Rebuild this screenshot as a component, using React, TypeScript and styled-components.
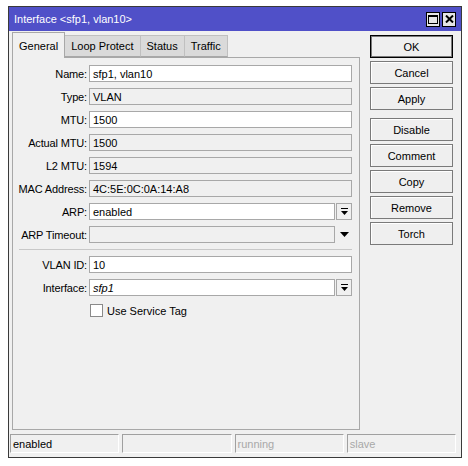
import React, { useState } from 'react';
import styled, { createGlobalStyle } from 'styled-components';

const GlobalStyle = createGlobalStyle`
  html, body {
    margin: 0;
    padding: 0;
    background: #ffffff;
  }
  body {
    font-family: "Liberation Sans", Arial, sans-serif;
    font-size: 11px;
    color: #000;
  }
`;

const Window = styled.div`
  margin: 6px 0 0 8px;
  width: 454px;
  height: 452px;
  box-sizing: border-box;
  border: 1px solid #3a3a3a;
  background: #f0f0f0;
  display: flex;
  flex-direction: column;
`;

const TitleBar = styled.div`
  height: 24px;
  flex: none;
  background: #5050c8;
  color: #fff;
  display: flex;
  align-items: center;
  padding: 0 5px 0 5px;
`;

const Title = styled.div`
  flex: 1;
  font-size: 11px;
  white-space: nowrap;
`;

const TitleButtons = styled.div`
  display: flex;
  gap: 2px;
`;

const TitleButton = styled.div`
  width: 14px;
  height: 15px;
  box-sizing: border-box;
  border: 1px solid #000;
  background: #e6e6e6;
  display: flex;
  align-items: center;
  justify-content: center;
`;

const Body = styled.div`
  flex: 1;
  display: flex;
  padding: 1px 8px 0 3px;
  min-height: 0;
`;

const LeftColumn = styled.div`
  width: 348px;
  display: flex;
  flex-direction: column;
`;

const TabRow = styled.div`
  height: 25px;
  display: flex;
  align-items: flex-end;
`;

const Tab = styled.div<{ $active?: boolean }>`
  box-sizing: border-box;
  height: ${p => (p.$active ? '26px' : '22px')};
  margin-bottom: ${p => (p.$active ? '-1px' : '0')};
  position: relative;
  z-index: ${p => (p.$active ? 1 : 0)};
  background: ${p => (p.$active ? '#f0f0f0' : '#dadada')};
  border: 1px solid ${p => (p.$active ? '#a8a8a8' : '#c0c0c0')};
  border-bottom: ${p => (p.$active ? 'none' : '1px solid #a8a8a8')};
  border-left: ${p => (p.$active ? '1px solid #a8a8a8' : 'none')};
  padding: 0 6px;
  display: flex;
  align-items: center;
  justify-content: center;
  font-size: 11px;
  cursor: default;
`;

const Panel = styled.div`
  box-sizing: border-box;
  height: 376px;
  border: 1px solid #a8a8a8;
  padding: 7px 7px 0 0;
  display: flex;
  flex-direction: column;
  gap: 6px;
`;

const Row = styled.div`
  display: flex;
  align-items: center;
  height: 17px;
`;

const Label = styled.div`
  width: 74px;
  text-align: right;
  margin-right: 2px;
  white-space: nowrap;
  flex: none;
  letter-spacing: -0.15px;
`;

const Field = styled.div<{ $readOnly?: boolean; $italic?: boolean }>`
  flex: 1;
  height: 17px;
  box-sizing: border-box;
  border: 1px solid #a8a8a8;
  background: ${p => (p.$readOnly ? '#f0f0f0' : '#ffffff')};
  padding: 0 3px;
  display: flex;
  align-items: center;
  font-style: ${p => (p.$italic ? 'italic' : 'normal')};
  white-space: nowrap;
  overflow: hidden;
`;

const DropButton = styled.div`
  width: 16px;
  height: 17px;
  margin-left: 1px;
  box-sizing: border-box;
  border: 1px solid #a8a8a8;
  background: #f0f0f0;
  display: flex;
  align-items: center;
  justify-content: center;
  flex: none;
`;

const DropArrow = styled.div`
  width: 16px;
  height: 17px;
  margin-left: 1px;
  display: flex;
  align-items: center;
  justify-content: center;
  flex: none;
`;

const Separator = styled.div`
  height: 1px;
  background: #c8c8c8;
  margin: 0 0 0 6px;
`;

const CheckRow = styled.label`
  display: flex;
  align-items: center;
  margin: 2px 0 0 77px;
  gap: 4px;
  cursor: default;
`;

const CheckBox = styled.span<{ $checked: boolean }>`
  width: 13px;
  height: 13px;
  box-sizing: border-box;
  border: 1px solid #8a8a8a;
  background: #fff;
  display: flex;
  align-items: center;
  justify-content: center;
`;

const ButtonColumn = styled.div`
  display: flex;
  flex-direction: column;
  gap: 3px;
  margin-left: 10px;
  padding-top: 3px;
  width: 83px;
`;

const Button = styled.button<{ $default?: boolean; $spaced?: boolean }>`
  height: 23px;
  box-sizing: border-box;
  margin: 0;
  margin-top: ${p => (p.$spaced ? '5px' : '0')};
  padding: 0;
  border: 1px solid ${p => (p.$default ? '#000' : '#7a7a7a')};
  box-shadow: ${p => (p.$default ? 'inset 0 0 0 1px #7a7a7a' : 'inset 1px 1px 0 #ffffff')};
  background: #efefef;
  font-family: "Liberation Sans", Arial, sans-serif;
  font-size: 11px;
  color: #000;
  cursor: default;
`;

const StatusBar = styled.div`
  display: flex;
  gap: 3px;
  padding: 2px 5px 4px 1px;
  margin-top: 2px;
`;

const StatusCell = styled.div<{ $dim?: boolean }>`
  flex: 1;
  height: 19px;
  box-sizing: border-box;
  border-top: 1px solid #a0a0a0;
  border-left: 1px solid #a0a0a0;
  border-right: 1px solid #ffffff;
  border-bottom: 1px solid #ffffff;
  padding: 0 2px;
  display: flex;
  align-items: center;
  color: ${p => (p.$dim ? '#a8a8a8' : '#000')};
`;

const MaxIcon = () => (
  <svg width="10" height="9" viewBox="0 0 10 9">
    <rect x="0.5" y="0.5" width="9" height="8" fill="none" stroke="#000" />
    <rect x="0" y="0" width="10" height="2" fill="#000" />
  </svg>
);

const CloseIcon = () => (
  <svg width="9" height="8" viewBox="0 0 9 8">
    <path d="M1 0.5 L8 7.5 M8 0.5 L1 7.5" stroke="#000" strokeWidth="2" />
  </svg>
);

const DropIcon = () => (
  <svg width="7" height="7" viewBox="0 0 7 7">
    <rect x="0" y="0" width="7" height="1" fill="#000" />
    <path d="M0 3 L7 3 L3.5 7 Z" fill="#000" />
  </svg>
);

const TriangleIcon = () => (
  <svg width="9" height="5" viewBox="0 0 9 5">
    <path d="M0 0 L9 0 L4.5 5 Z" fill="#000" />
  </svg>
);

const tabs = ['General', 'Loop Protect', 'Status', 'Traffic'];

const topFields: { label: string; value: string; readOnly?: boolean }[] = [
  { label: 'Name:', value: 'sfp1, vlan10' },
  { label: 'Type:', value: 'VLAN', readOnly: true },
  { label: 'MTU:', value: '1500' },
  { label: 'Actual MTU:', value: '1500', readOnly: true },
  { label: 'L2 MTU:', value: '1594', readOnly: true },
  { label: 'MAC Address:', value: '4C:5E:0C:0A:14:A8', readOnly: true },
];

const buttons = ['OK', 'Cancel', 'Apply', 'Disable', 'Comment', 'Copy', 'Remove', 'Torch'];

export default function App() {
  const [activeTab, setActiveTab] = useState('General');
  const [serviceTag, setServiceTag] = useState(false);

  return (
    <>
      <GlobalStyle />
      <Window>
        <TitleBar>
          <Title>Interface &lt;sfp1, vlan10&gt;</Title>
          <TitleButtons>
            <TitleButton><MaxIcon /></TitleButton>
            <TitleButton><CloseIcon /></TitleButton>
          </TitleButtons>
        </TitleBar>
        <Body>
          <LeftColumn>
            <TabRow>
              {tabs.map(t => (
                <Tab key={t} $active={t === activeTab} onClick={() => setActiveTab(t)}>
                  {t}
                </Tab>
              ))}
            </TabRow>
            <Panel>
              {topFields.map(f => (
                <Row key={f.label}>
                  <Label>{f.label}</Label>
                  <Field $readOnly={f.readOnly}>{f.value}</Field>
                </Row>
              ))}
              <Row>
                <Label>ARP:</Label>
                <Field>enabled</Field>
                <DropButton><DropIcon /></DropButton>
              </Row>
              <Row>
                <Label>ARP Timeout:</Label>
                <Field $readOnly />
                <DropArrow><TriangleIcon /></DropArrow>
              </Row>
              <Separator />
              <Row>
                <Label>VLAN ID:</Label>
                <Field>10</Field>
              </Row>
              <Row>
                <Label>Interface:</Label>
                <Field $italic>sfp1</Field>
                <DropButton><DropIcon /></DropButton>
              </Row>
              <CheckRow onClick={() => setServiceTag(!serviceTag)}>
                <CheckBox $checked={serviceTag}>
                  {serviceTag ? (
                    <svg width="9" height="9" viewBox="0 0 9 9">
                      <path d="M1 4 L3.5 7 L8 1" stroke="#000" strokeWidth="1.5" fill="none" />
                    </svg>
                  ) : null}
                </CheckBox>
                Use Service Tag
              </CheckRow>
            </Panel>
          </LeftColumn>
          <ButtonColumn>
            {buttons.map(b => (
              <Button key={b} $default={b === 'OK'} $spaced={b === 'Disable'}>
                {b}
              </Button>
            ))}
          </ButtonColumn>
        </Body>
        <StatusBar>
          <StatusCell>enabled</StatusCell>
          <StatusCell />
          <StatusCell $dim>running</StatusCell>
          <StatusCell $dim>slave</StatusCell>
        </StatusBar>
      </Window>
    </>
  );
}
